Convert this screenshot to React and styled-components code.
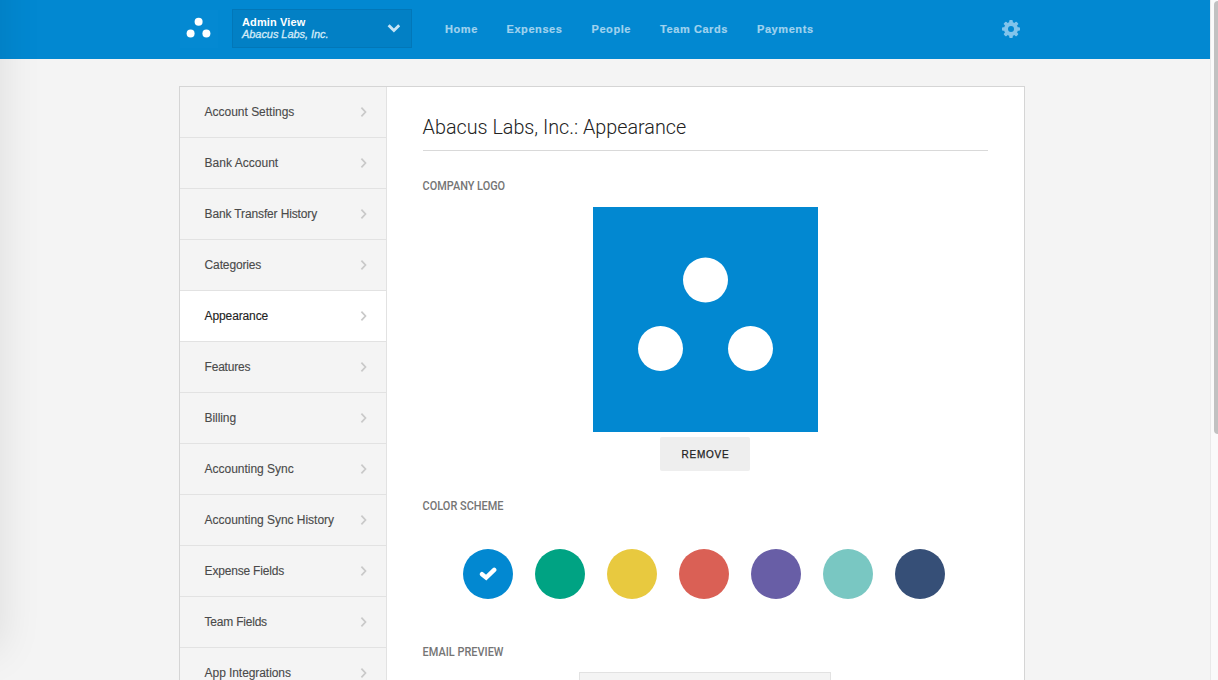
import React from 'react';
import styled, { createGlobalStyle } from 'styled-components';

const Global = createGlobalStyle`
  * { box-sizing: border-box; }
  html, body { margin: 0; height: 680px; overflow: hidden; }
  body { background: #f4f4f4; font-family: "Liberation Sans", Arial, sans-serif; }
`;

const Page = styled.div`
  position: relative;
  display: flex;
  width: 1218px;
  height: 680px;
  overflow: hidden;
`;
const Screen = styled.div`
  width: 1210px;
  height: 680px;
  overflow: hidden;
`;
const ScrollTrack = styled.div`
  width: 8px;
  padding: 1px 0 0 3px;
  background: #fafafa;
  border-left: 1px solid #e9e9e9;
`;
const ScrollThumb = styled.div`
  height: 433px;
  background: #c1c1c1;
  border-radius: 4px 0 0 4px;
`;
const EdgeShadow = styled.div`
  position: absolute;
  left: -200px;
  top: -60px;
  width: 200px;
  height: 710px;
  box-shadow: 0 0 40px rgba(0, 0, 0, 0.1);
  pointer-events: none;
`;

const Header = styled.header`
  height: 59px;
  background: #0288d1;
`;
const HeaderInner = styled.div`
  display: flex;
  align-items: center;
  width: 846px;
  height: 58px;
  margin-left: 179px;
`;
const Brand = styled.svg`
  width: 38px;
  height: 38px;
  margin-left: 1px;
`;
const AccountSelect = styled.div`
  display: flex;
  align-items: center;
  justify-content: space-between;
  width: 180px;
  height: 39px;
  margin: 0 0 1px 14px;
  padding: 0 11px 0 9px;
  background: #0280c5;
  border: 1px solid #0277b8;
`;
const AccountText = styled.div`
  padding-bottom: 2px;
`;
const AccountName = styled.div`
  color: #fff;
  font-size: 11px;
  line-height: 12px;
  font-weight: 700;
  letter-spacing: 0.12px;
`;
const Company = styled.div`
  color: #d3eaf8;
  font-size: 11px;
  line-height: 12px;
  font-style: italic;
  letter-spacing: -0.06px;
  -webkit-text-stroke: 0.3px #d3eaf8;
`;
const Nav = styled.nav`
  display: flex;
  gap: 28px;
  margin-left: 33px;
  flex: 1;
`;
const NavLink = styled.a`
  width: ${(p) => p.$w}px;
  white-space: nowrap;
  color: #a0d2ee;
  font-size: 11px;
  font-weight: 700;
  letter-spacing: 0.58px;
  -webkit-text-stroke: 0.2px #a0d2ee;
`;
const Gear = styled.svg`
  width: 18px;
  height: 18px;
  margin-right: 5px;
`;

const Panel = styled.div`
  display: flex;
  width: 846px;
  height: 700px;
  margin: 27px 0 0 179px;
  border: 1px solid #d5d5d5;
  background: #fff;
`;
const Sidebar = styled.aside`
  width: 207px;
  background: #f4f4f4;
  border-right: 1px solid #e2e2e2;
`;
const SideItem = styled.a`
  display: flex;
  align-items: center;
  justify-content: space-between;
  height: 51px;
  padding: 0 18px 0 24.6px;
  border-bottom: 1px solid #e2e2e2;
  background: ${(p) => (p.$active ? '#fff' : 'transparent')};
  color: ${(p) => (p.$active ? '#222' : '#4a4a4a')};
  font-size: 12px;
  letter-spacing: ${(p) => p.$tracking}px;
  -webkit-text-stroke: 0.12px currentColor;
`;

const Main = styled.main`
  width: 637px;
  padding: 0 36px;
  font-family: Roboto, sans-serif;
`;
const Title = styled.h1`
  height: 64px;
  margin: 0;
  padding-top: 26px;
  border-bottom: 1px solid #d9d9d9;
  color: #222;
  font-size: 20px;
  line-height: 28px;
  font-weight: 300;
`;
const Squeeze = styled.span`
  display: inline-block;
  white-space: nowrap;
  transform-origin: 0 50%;
  transform: translateX(-0.4px) scaleX(${(p) => p.$x});
`;
const SectionTitle = styled.h2`
  height: 16px;
  margin: ${(p) => p.$top}px 0 0;
  color: #757575;
  font-size: 13px;
  line-height: 16px;
  font-weight: 500;
`;
const LogoBlock = styled.div`
  display: flex;
  flex-direction: column;
  align-items: center;
  gap: 5px;
  margin-top: 13px;
`;
const LogoImage = styled.svg`
  display: block;
  width: 225px;
  height: 225px;
`;
const RemoveButton = styled.button`
  width: 90px;
  height: 34px;
  margin-right: 1px;
  padding: 1px 0 0 1px;
  border: 0;
  border-radius: 2px;
  background: #eee;
  color: #222;
  font: 400 10px/33px "Liberation Sans", Arial, sans-serif;
  letter-spacing: 0.75px;
  -webkit-text-stroke: 0.25px #222;
`;
const Swatches = styled.div`
  display: flex;
  gap: 22px;
  margin: 35px 0 0 40px;
`;
const Swatch = styled.div`
  display: flex;
  align-items: center;
  justify-content: center;
  width: 50px;
  height: 50px;
  border-radius: 50%;
  background: ${(p) => p.$color};
`;
const Preview = styled.div`
  width: 252px;
  height: 100px;
  margin: 12px 0 0 156px;
  background: #f4f4f4;
  border: 1px solid #e2e2e2;
`;

const items = [
  ['Account Settings', -0.02], ['Bank Account', 0.02], ['Bank Transfer History', -0.14],
  ['Categories', -0.14], ['Appearance', -0.12], ['Features', -0.22], ['Billing', -0.08],
  ['Accounting Sync', -0.02], ['Accounting Sync History', -0.03], ['Expense Fields', -0.19],
  ['Team Fields', -0.22], ['App Integrations', -0.07],
];
const links = [['Home', 33.5], ['Expenses', 57], ['People', 40.5], ['Team Cards', 69], ['Payments', 57]];
const colors = ['#0288d1', '#00a383', '#e8c93f', '#da6055', '#685ea6', '#79c7c2', '#364f77'];

const Chevron = () => (
  <svg width="8" height="10" viewBox="0 0 8 10" fill="none" stroke="#c9c9c9" strokeWidth="1.7">
    <path d="M1.4 .6 5.5 5 1.4 9.4" />
  </svg>
);

export default function App() {
  return (
    <Page>
      <Global />
      <Screen>
        <Header>
          <HeaderInner>
            <Brand viewBox="0 0 38 38" fill="#fff">
              <rect width="38" height="38" fill="#0489d2" />
              <circle cx="18.6" cy="11.7" r="4" />
              <circle cx="10.6" cy="23.6" r="4" />
              <circle cx="26.4" cy="23.6" r="4" />
            </Brand>
            <AccountSelect>
              <AccountText>
                <AccountName>Admin View</AccountName>
                <Company>Abacus Labs, Inc.</Company>
              </AccountText>
              <svg width="13" height="9" viewBox="0 0 13 9" fill="none" stroke="#c4e4f6" strokeWidth="2.9">
                <path d="M1.6 1.3 6.9 6.5 12.2 1.3" />
              </svg>
            </AccountSelect>
            <Nav>
              {links.map(([name, w]) => <NavLink key={name} $w={w}>{name}</NavLink>)}
            </Nav>
            <Gear viewBox="0 0 18 18">
              <g fill="#82c4eb">
                {[0, 45, 90, 135].map((a) => (
                  <rect key={a} x="7.2" y="0" width="3.6" height="18" rx="1" transform={`rotate(${a} 9 9)`} />
                ))}
                <circle cx="9" cy="9" r="7" />
              </g>
              <circle cx="9" cy="9" r="3" fill="#0288d1" />
            </Gear>
          </HeaderInner>
        </Header>
        <Panel>
          <Sidebar>
            {items.map(([name, tracking]) => (
              <SideItem key={name} $tracking={tracking} $active={name === 'Appearance'}>
                <span>{name}</span>
                <Chevron />
              </SideItem>
            ))}
          </Sidebar>
          <Main>
            <Title><Squeeze $x={0.988}>Abacus Labs, Inc.: Appearance</Squeeze></Title>
            <SectionTitle $top={27}><Squeeze $x={0.839}>COMPANY LOGO</Squeeze></SectionTitle>
            <LogoBlock>
              <LogoImage viewBox="0 0 225 225">
                <rect width="225" height="225" fill="#0288d1" />
                <g fill="#fff">
                  <circle cx="112.5" cy="73" r="22.5" />
                  <circle cx="67.5" cy="141.5" r="22.5" />
                  <circle cx="157.5" cy="141.5" r="22.5" />
                </g>
              </LogoImage>
              <RemoveButton>REMOVE</RemoveButton>
            </LogoBlock>
            <SectionTitle $top={27}><Squeeze $x={0.842}>COLOR SCHEME</Squeeze></SectionTitle>
            <Swatches>
              {colors.map((c, i) => (
                <Swatch key={c} $color={c}>
                  {i === 0 && (
                    <svg width="18" height="14" viewBox="0 0 18 14" fill="none" stroke="#fff" strokeWidth="4.4" strokeLinecap="round">
                      <path d="M3 7.2 7.2 10.6 15.2 2.9" />
                    </svg>
                  )}
                </Swatch>
              ))}
            </Swatches>
            <SectionTitle $top={45}><Squeeze $x={0.842}>EMAIL PREVIEW</Squeeze></SectionTitle>
            <Preview />
          </Main>
        </Panel>
      </Screen>
      <ScrollTrack><ScrollThumb /></ScrollTrack>
      <EdgeShadow />
    </Page>
  );
}
